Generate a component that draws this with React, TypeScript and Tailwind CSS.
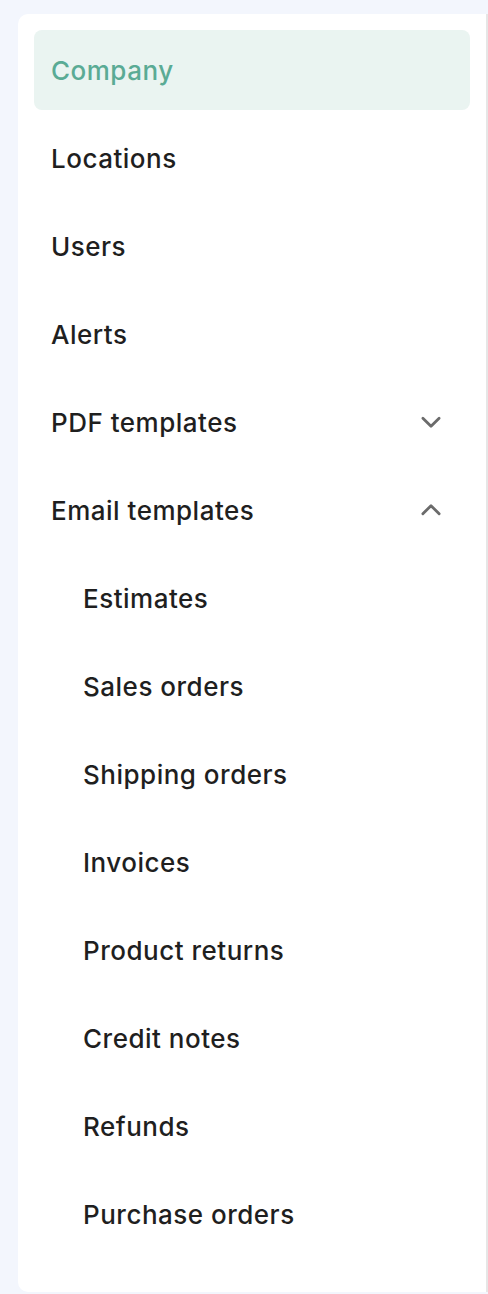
import { useState } from "react";

type NavItem = {
  label: string;
  children?: string[];
};

const items: NavItem[] = [
  { label: "Company" },
  { label: "Locations" },
  { label: "Users" },
  { label: "Alerts" },
  { label: "PDF templates", children: [] },
  {
    label: "Email templates",
    children: [
      "Estimates",
      "Sales orders",
      "Shipping orders",
      "Invoices",
      "Product returns",
      "Credit notes",
      "Refunds",
      "Purchase orders",
    ],
  },
];

function Chevron({ up }: { up?: boolean }) {
  return (
    <svg width="26" height="26" viewBox="0 0 24 24" fill="none" className="text-[#6b6b6b]">
      <path
        d={up ? "M4.5 15.5 12 8l7.5 7.5" : "M4.5 8.5 12 16l7.5-7.5"}
        stroke="currentColor"
        strokeWidth="2.6"
        strokeLinecap="round"
        strokeLinejoin="round"
      />
    </svg>
  );
}

export default function App() {
  const [active, setActive] = useState("Company");
  const [open, setOpen] = useState<Record<string, boolean>>({ "Email templates": true });

  return (
    <div className="min-h-screen bg-[#f3f6fd] pl-[18px] pt-[14px] font-['Inter',sans-serif]">
      <nav className="h-[1278px] overflow-hidden rounded-l-[10px] border-r-2 border-[#e6e6e6] bg-white p-4">
        <ul className="flex flex-col gap-2">
          {items.map((item) => {
            const isOpen = open[item.label];
            return (
              <li key={item.label} className="flex flex-col gap-2">
                <button
                  onClick={() => {
                    if (item.children) setOpen((o) => ({ ...o, [item.label]: !o[item.label] }));
                    else setActive(item.label);
                  }}
                  className={`flex h-[80px] items-center justify-between rounded-[8px] pl-[17px] pr-[26px] text-left text-[26px] font-medium tracking-[0.5px] ${
                    active === item.label ? "bg-[#eaf4f1] text-[#5aab95]" : "text-[#1f1f1f]"
                  }`}
                >
                  <span>{item.label}</span>
                  {item.children && <Chevron up={isOpen} />}
                </button>
                {item.children && isOpen && (
                  <ul className="flex flex-col gap-2">
                    {item.children.map((child) => (
                      <li key={child}>
                        <button
                          onClick={() => setActive(child)}
                          className={`flex h-[80px] w-full items-center rounded-[8px] pl-[49px] text-left text-[26px] font-medium tracking-[0.5px] ${
                            active === child ? "bg-[#eaf4f1] text-[#5aab95]" : "text-[#1f1f1f]"
                          }`}
                        >
                          {child}
                        </button>
                      </li>
                    ))}
                  </ul>
                )}
              </li>
            );
          })}
        </ul>
      </nav>
    </div>
  );
}
